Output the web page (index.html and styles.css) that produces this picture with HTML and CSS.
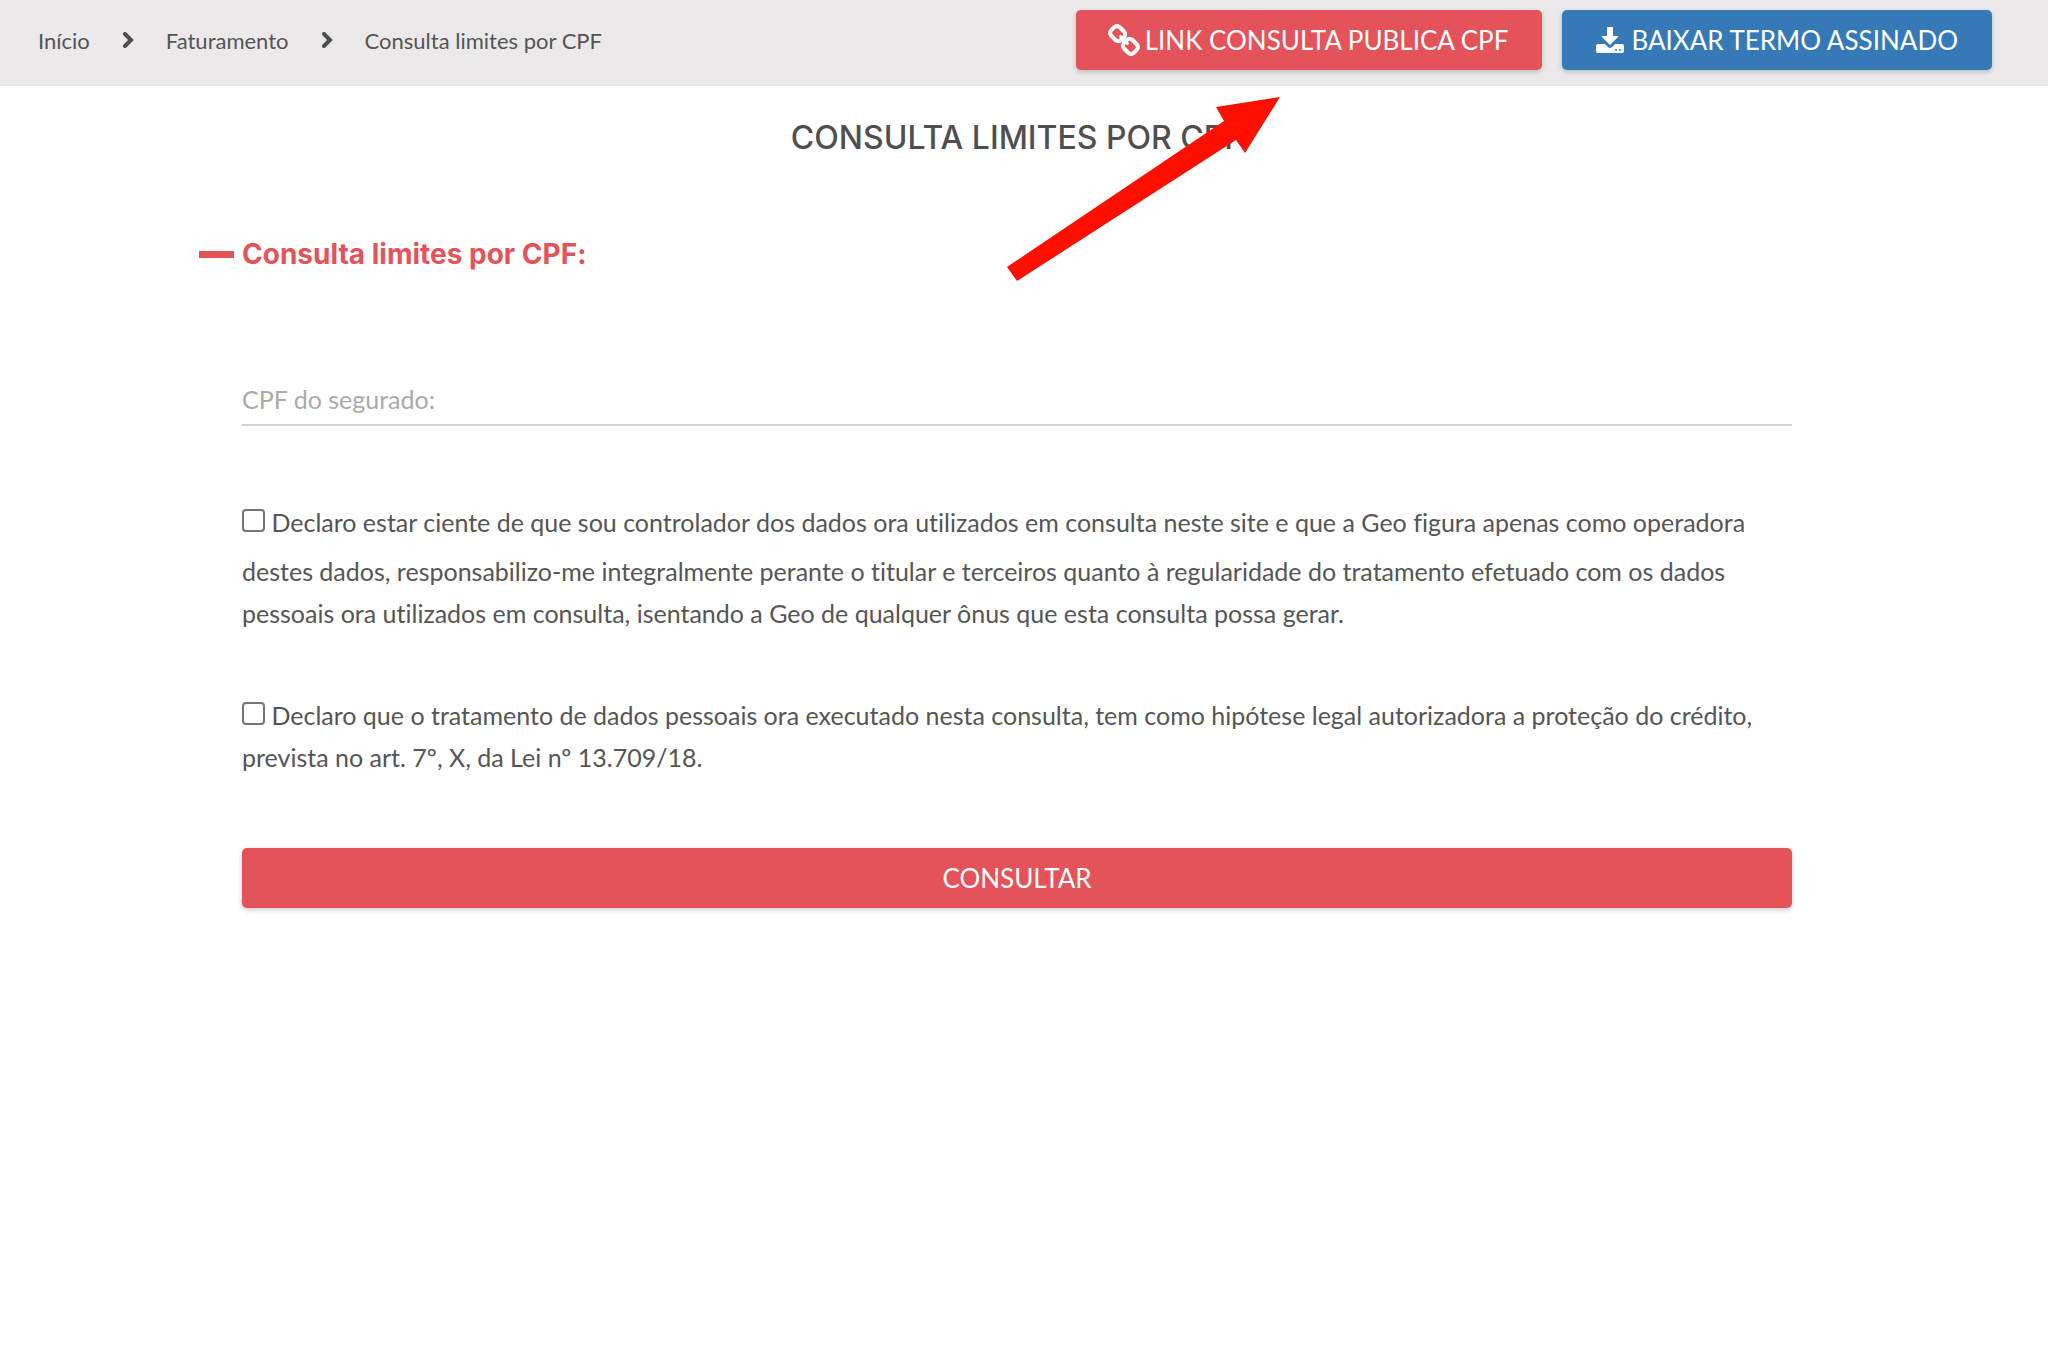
FILE: index.html
```html
<!DOCTYPE html>
<html lang="pt-BR">
  <head>
    <meta charset="UTF-8" />
    <meta name="viewport" content="width=device-width, initial-scale=1" />
    <title>Consulta limites por CPF</title>
    <link rel="stylesheet" href="styles.css">
  </head>
  <body>
    <header class="topbar">
      <nav class="breadcrumb">
        <a href="#">Início</a>
        <svg class="chevron" viewBox="0 0 12 16"><path d="M3 2l6 6-6 6" /></svg>
        <a href="#">Faturamento</a>
        <svg class="chevron" viewBox="0 0 12 16"><path d="M3 2l6 6-6 6" /></svg>
        <a href="#">Consulta limites por CPF</a>
      </nav>
      <div class="actions">
        <button type="button" class="btn btn-red">
          <svg class="icon" viewBox="0 0 28 28">
            <g fill="none" stroke="#fff" stroke-width="4" transform="rotate(45 14 14)">
              <rect x="-2" y="8" width="14" height="12" rx="4" />
              <rect x="16" y="8" width="14" height="12" rx="4" />
              <path stroke-width="3" stroke-linecap="round" d="M9 14h10" />
            </g>
          </svg>
          LINK CONSULTA PUBLICA CPF
        </button>
        <button type="button" class="btn btn-blue">
          <svg class="icon" viewBox="0 0 28 28">
            <path fill="#fff" d="M11 1h6v9h5q1 0 0 1l-8 8-8-8q-1-1 0-1h5zM2 18h7l3 3q2 2 4 0l3-3h7q2 0 2 2v5q0 2-2 2H2q-2 0-2-2v-5q0-2 2-2z" />
            <g fill="#357ab7">
              <circle cx="20" cy="24" r="1" />
              <circle cx="24" cy="24" r="1" />
            </g>
          </svg>
          BAIXAR TERMO ASSINADO
        </button>
      </div>
    </header>
    <main class="content">
      <h1>CONSULTA LIMITES POR CPF</h1>
      <svg class="arrow" viewBox="0 0 290 200">
        <path d="M7 177L17 191 236 50l9 13 35-56-64 10 8 14z" />
      </svg>
      <form class="form">
        <h2>Consulta limites por CPF:</h2>
        <input type="text" class="cpf" placeholder="CPF do segurado:" aria-label="CPF do segurado" />
        <label class="termo termo-dados">
          <input type="checkbox" />
          Declaro estar ciente de que sou controlador dos dados ora utilizados em consulta neste site e que a Geo figura apenas como operadora destes dados, responsabilizo-me integralmente perante o titular e terceiros quanto à regularidade do tratamento efetuado com os dados pessoais ora utilizados em consulta, isentando a Geo de qualquer ônus que esta consulta possa gerar.
        </label>
        <label class="termo">
          <input type="checkbox" />
          Declaro que o tratamento de dados pessoais ora executado nesta consulta, tem como hipótese legal autorizadora a proteção do crédito, prevista no art. 7º, X, da Lei nº 13.709/18.
        </label>
        <button type="submit" class="btn btn-red btn-block">CONSULTAR</button>
      </form>
    </main>
  </body>
</html>
```
FILE: styles.css
```css
* {
  box-sizing: border-box;
}
body {
  margin: 0;
  font-family: Lato, "Liberation Sans", sans-serif;
  font-size: 25px;
  font-variant-ligatures: none;
  color: #555;
  background-color: #fff;
}
.topbar {
  display: flex;
  justify-content: space-between;
  align-items: flex-start;
  min-height: 86px;
  padding: 10px 56px 16px 38px;
  background-color: #ebe9ea;
}
.breadcrumb {
  display: flex;
  align-items: center;
  gap: 32px;
  height: 60px;
  font-size: 22px;
}
.breadcrumb a {
  color: #555;
  text-decoration: none;
}
.chevron {
  width: 12px;
  height: 16px;
  fill: none;
  stroke: #4f4f4f;
  stroke-width: 4;
  stroke-linecap: round;
}
.actions {
  display: flex;
  gap: 20px;
}
.btn {
  display: flex;
  align-items: center;
  justify-content: center;
  gap: 7px;
  height: 60px;
  padding: 0 34px;
  border: none;
  border-radius: 5px;
  box-shadow: 0 2px 5px rgba(0, 0, 0, 0.2);
  font-family: inherit;
  font-size: 26px;
  color: #fff;
  cursor: pointer;
}
.btn-red {
  background-color: #e5535a;
}
.btn-blue {
  background-color: #357ab7;
}
.btn:hover {
  opacity: 0.9;
}
.icon {
  width: 28px;
  height: 28px;
  overflow: visible;
}
.content {
  position: relative;
  padding: 32px 256px 48px 242px;
}
h1 {
  margin: 0;
  font-family: Inter, "Liberation Sans", sans-serif;
  font-size: 32px;
  font-weight: 500;
  line-height: 40px;
  color: #4f4f4f;
  text-align: center;
}
.arrow {
  position: absolute;
  top: 4px;
  left: calc(50% - 24px);
  width: 290px;
  height: 200px;
  fill: #ff0f00;
}
.form {
  display: flex;
  flex-direction: column;
}
h2 {
  display: flex;
  align-items: center;
  gap: 8px;
  margin: 76px 0 0 -43px;
  font-family: Inter, "Liberation Sans", sans-serif;
  font-size: 28px;
  font-weight: 700;
  line-height: 40px;
  color: #e5535a;
}
h2::before {
  content: "";
  width: 35px;
  height: 7px;
  background-color: #e5535a;
}
.cpf {
  height: 52px;
  margin-top: 100px;
  padding: 0;
  border: none;
  border-bottom: 2px solid #d2d2d2;
  outline: none;
  font-family: inherit;
  font-size: 25px;
  color: #555;
}
.cpf::placeholder {
  color: #aaa;
}
.termo {
  margin-top: 60px;
  line-height: 42px;
}
.termo input {
  appearance: none;
  width: 23px;
  height: 23px;
  margin: 0;
  border: 2px solid #767676;
  border-radius: 4px;
  background-color: #fff;
}
.termo input:checked {
  background-color: #e5535a;
}
.termo-dados {
  margin-top: 68px;
}
.termo-dados::first-line {
  line-height: 56px;
}
.btn-block {
  width: 100%;
  margin-top: 70px;
}
```
